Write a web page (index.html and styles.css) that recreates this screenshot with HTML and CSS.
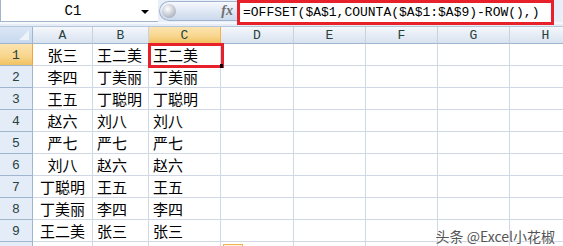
FILE: index.html
```html
<!DOCTYPE html>
<html lang="zh-CN">
<head>
    <meta charset="UTF-8">
    <meta name="viewport" content="width=device-width, initial-scale=1.0">
    <title>OFFSET 反转列表</title>
    <link rel="stylesheet" href="styles.css">
</head>
<body>
    <div class="excel">
        <!-- 编辑栏 -->
        <div class="formula-bar">
            <div class="name-box">
                <span class="name">C1</span>
                <span class="arrow"></span>
            </div>
            <div class="grip">
                <span class="knob"></span>
                <span class="fx">fx</span>
            </div>
            <div class="formula">=OFFSET($A$1,COUNTA($A$1:$A$9)-ROW(),)</div>
        </div>
        <div class="strip"></div>

        <!-- 工作表 -->
        <div class="sheet">
            <div class="corner"></div>
            <div class="col-head">A</div>
            <div class="col-head">B</div>
            <div class="col-head selected">C</div>
            <div class="col-head">D</div>
            <div class="col-head">E</div>
            <div class="col-head">F</div>
            <div class="col-head">G</div>
            <div class="col-head">H</div>

            <div class="row-head selected">1</div>
            <div class="cell center">张三</div><div class="cell">王二美</div><div class="cell active">王二美</div>
            <div class="cell"></div><div class="cell"></div><div class="cell"></div><div class="cell"></div><div class="cell"></div>

            <div class="row-head">2</div>
            <div class="cell center">李四</div><div class="cell">丁美丽</div><div class="cell">丁美丽</div>
            <div class="cell"></div><div class="cell"></div><div class="cell"></div><div class="cell"></div><div class="cell"></div>

            <div class="row-head">3</div>
            <div class="cell center">王五</div><div class="cell">丁聪明</div><div class="cell">丁聪明</div>
            <div class="cell"></div><div class="cell"></div><div class="cell"></div><div class="cell"></div><div class="cell"></div>

            <div class="row-head">4</div>
            <div class="cell center">赵六</div><div class="cell">刘八</div><div class="cell">刘八</div>
            <div class="cell"></div><div class="cell"></div><div class="cell"></div><div class="cell"></div><div class="cell"></div>

            <div class="row-head">5</div>
            <div class="cell center">严七</div><div class="cell">严七</div><div class="cell">严七</div>
            <div class="cell"></div><div class="cell"></div><div class="cell"></div><div class="cell"></div><div class="cell"></div>

            <div class="row-head">6</div>
            <div class="cell center">刘八</div><div class="cell">赵六</div><div class="cell">赵六</div>
            <div class="cell"></div><div class="cell"></div><div class="cell"></div><div class="cell"></div><div class="cell"></div>

            <div class="row-head">7</div>
            <div class="cell center">丁聪明</div><div class="cell">王五</div><div class="cell">王五</div>
            <div class="cell"></div><div class="cell"></div><div class="cell"></div><div class="cell"></div><div class="cell"></div>

            <div class="row-head">8</div>
            <div class="cell center">丁美丽</div><div class="cell">李四</div><div class="cell">李四</div>
            <div class="cell"></div><div class="cell"></div><div class="cell"></div><div class="cell"></div><div class="cell"></div>

            <div class="row-head">9</div>
            <div class="cell center">王二美</div><div class="cell">张三</div><div class="cell">张三</div>
            <div class="cell"></div><div class="cell"></div><div class="cell"></div><div class="cell"></div><div class="cell"></div>

            <!-- 第 10 行只露出顶边 -->
            <div class="row-head"></div>
            <div class="cell"></div><div class="cell"></div><div class="cell"></div>
            <div class="cell"></div><div class="cell"></div><div class="cell"></div><div class="cell"></div><div class="cell"></div>
        </div>

        <span class="fill-options"></span>
        <div class="watermark">头条 @Excel小花椒</div>
    </div>
</body>
</html>
```

FILE: styles.css
```css
body {
    margin: 0;
    background-color: white;
    overflow: hidden;
}
.excel {
    position: relative;
    width: 563px;
    height: 246px;
    overflow: hidden;
    background-color: white;
}

/* 编辑栏 */
.formula-bar {
    display: flex;
    height: 22px;
    background-color: #e9eff8;
}
.name-box {
    width: 157px;
    height: 21px;
    display: flex;
    align-items: center;
    background-color: white;
    border-left: 1px solid #a3b5cc;
    border-bottom: 1px solid #a3b5cc;
    box-sizing: content-box;
}
.name {
    flex: 1;
    text-align: center;
    padding-left: 4px;
    font-family: "Liberation Mono", monospace;
    font-size: 14px;
    color: #000;
}
.arrow {
    width: 0;
    height: 0;
    margin-right: 9px;
    margin-top: 2px;
    border-left: 4px solid transparent;
    border-right: 4px solid transparent;
    border-top: 4px solid #000;
}
.grip {
    width: 78px;
    height: 20px;
    margin-top: 1px;
    margin-left: 1px;
    display: flex;
    align-items: center;
    justify-content: space-between;
    border: 1px solid #9fb3cf;
    border-right: none;
    border-radius: 11px 0 0 11px;
    background: linear-gradient(#f7f9fd, #dde7f4 55%, #cbd9ec);
    box-sizing: border-box;
}
.knob {
    width: 14px;
    height: 14px;
    margin-left: 2px;
    border-radius: 50%;
    background: radial-gradient(circle at 40% 35%, #ffffff, #c3c8d0 55%, #8f99a6);
}
.fx {
    margin-right: 4px;
    font-family: "Liberation Serif", serif;
    font-style: italic;
    font-weight: bold;
    font-size: 14px;
    color: #6f6f6f;
}
.formula {
    width: 317px;
    height: 25px;
    margin-right: 8px;
    padding-left: 3px;
    border: 3px solid #e8202a;
    box-sizing: border-box;
    background-color: white;
    font-family: "Liberation Mono", monospace;
    font-size: 13px;
    line-height: 19px;
    color: #000;
    white-space: nowrap;
    position: relative;
    z-index: 1;
}
.strip {
    height: 5px;
    background-color: #e6edf6;
    border-top: 2px solid #f4f7fb;
    border-bottom: 1px solid #b6c6da;
    box-sizing: border-box;
}

/* 工作表 */
.sheet {
    display: grid;
    grid-template-columns: 33px 60px 56px 72px 73px 72px 72px 72px 72px;
    grid-template-rows: 17px repeat(10, 22px);
}
.corner {
    position: relative;
    background: linear-gradient(#dce7f6, #c7d8ee);
    border-right: 1px solid #9eb6ce;
    border-bottom: 1px solid #9eb6ce;
}
.corner::after {
    content: "";
    position: absolute;
    right: 3px;
    bottom: 3px;
    border-left: 10px solid transparent;
    border-bottom: 10px solid #eef3fa;
}
.col-head {
    background: linear-gradient(#f5f8fc, #e3eaf4 60%, #d9e3ef);
    border-right: 1px solid #c5d2e2;
    border-bottom: 1px solid #9eb6ce;
    font-family: "Liberation Mono", monospace;
    font-size: 13px;
    line-height: 17px;
    text-align: center;
    color: #27413e;
}
.col-head.selected {
    background: linear-gradient(#fbe4b0, #f8d58c 60%, #f1c15f);
    border-right-color: #f2b04e;
    border-bottom-color: #f2a441;
}
.row-head {
    background-color: #e4ecf7;
    border-right: 1px solid #9eb6ce;
    border-bottom: 1px solid #9eb6ce;
    font-family: "Liberation Mono", monospace;
    font-size: 13px;
    line-height: 24px;
    text-align: center;
    color: #27413e;
}
.row-head.selected {
    background: linear-gradient(#fbe4b0, #f8d58c 60%, #f1c15f);
    border-right-color: #f2a441;
}
.cell {
    border-right: 1px solid #d0d7e5;
    border-bottom: 1px solid #d0d7e5;
    padding-left: 4px;
    font-family: "Noto Sans CJK SC", sans-serif;
    font-size: 15px;
    line-height: 21px;
    color: #000;
    white-space: nowrap;
    overflow: hidden;
}
.cell.center {
    text-align: center;
    padding-left: 0;
}
.cell.active {
    position: relative;
    overflow: visible;
}
.cell.active::before {
    content: "";
    position: absolute;
    left: -1px;
    top: -1px;
    width: 76px;
    height: 25px;
    border: 3px solid #e8202a;
    box-sizing: border-box;
}
.cell.active::after {
    content: "";
    position: absolute;
    right: -3px;
    bottom: -3px;
    width: 3px;
    height: 4px;
    background-color: #000;
}
.fill-options {
    position: absolute;
    left: 223px;
    top: 244px;
    width: 18px;
    height: 6px;
    border: 1px solid #f2b04e;
    background-color: #fff4dc;
}
.watermark {
    position: absolute;
    right: 8px;
    top: 226px;
    font-family: "Noto Sans CJK SC", sans-serif;
    font-size: 14px;
    color: #555;
    text-shadow: 0 0 2px white, 0 0 2px white;
}
```
